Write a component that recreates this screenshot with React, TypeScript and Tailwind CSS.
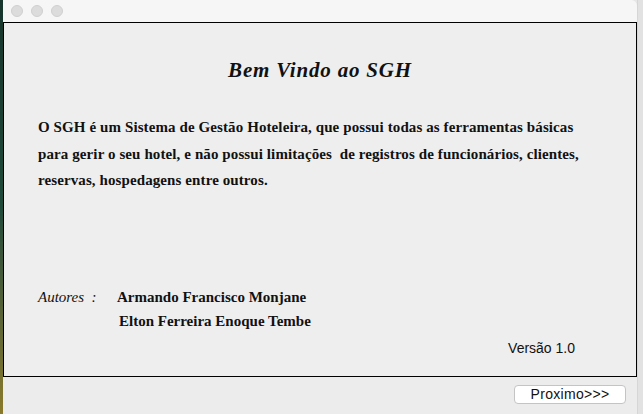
export default function App() {
  const serif = { fontFamily: '"Liberation Serif", "Times New Roman", serif' };
  const sans = { fontFamily: '"Liberation Sans", Arial, sans-serif' };

  return (
    <div className="w-[643px] h-[414px] flex overflow-hidden bg-[#e6e6e6]">
      {/* desktop strip on the left */}
      <div className="w-[3px] h-full bg-gradient-to-b from-[#17352c] via-[#1f4a3a] to-[#8a7a2a]" />

      {/* window */}
      <div className="w-[634px] h-full flex flex-col bg-[#ececec] rounded-tr-[6px] overflow-hidden">
        {/* title bar */}
        <div className="h-[22px] shrink-0 bg-[#f6f6f6] flex items-center gap-[8px] pl-[8px]">
          <span className="w-[12px] h-[12px] rounded-full bg-[#dcdcdc] border border-[#d0d0d0]" />
          <span className="w-[12px] h-[12px] rounded-full bg-[#dcdcdc] border border-[#d0d0d0]" />
          <span className="w-[12px] h-[12px] rounded-full bg-[#dcdcdc] border border-[#d0d0d0]" />
        </div>

        {/* main panel */}
        <div className="h-[355px] shrink-0 border border-black bg-[#eeeeee] text-[#111] flex flex-col">
          <h1
            className="mt-[35px] text-center text-[21px] leading-[24px] font-bold italic tracking-[0.8px]"
            style={serif}
          >
            Bem Vindo ao SGH
          </h1>

          <p
            className="mt-[32px] pl-[34px] pr-[20px] text-[15px] leading-[26.5px] font-bold tracking-[0.1px] whitespace-pre-wrap"
            style={serif}
          >
            {"O SGH é um Sistema de Gestão Hoteleira, que possui todas as ferramentas básicas\npara gerir o seu hotel, e não possui limitações  de registros de funcionários, clientes,\nreservas, hospedagens entre outros."}
          </p>

          <div className="mt-[91px] pl-[34px] text-[15px] leading-[24px]" style={serif}>
            <div className="flex">
              <span className="w-[79px] italic whitespace-pre">Autores  :</span>
              <span className="font-bold">Armando Francisco Monjane</span>
            </div>
            <div className="pl-[81px] font-bold">Elton Ferreira Enoque Tembe</div>
          </div>

          <div className="mt-[7px] pr-[61px] text-right text-[14px] leading-[16px]" style={sans}>
            Versão 1.0
          </div>
        </div>

        {/* bottom bar */}
        <div className="flex-1 flex justify-end items-start pt-[8px] pr-[11px]">
          <button
            className="w-[112px] h-[19px] rounded-[4px] bg-white border border-[#c4c4c4] text-[14px] leading-[17px] tracking-[0.3px] text-[#111]"
            style={sans}
          >
            Proximo&gt;&gt;&gt;
          </button>
        </div>
      </div>

      {/* neighbouring window strip */}
      <div className="flex-1 h-full bg-[#e2e2e2] border-l border-[#d6d6d6]" />
    </div>
  );
}
